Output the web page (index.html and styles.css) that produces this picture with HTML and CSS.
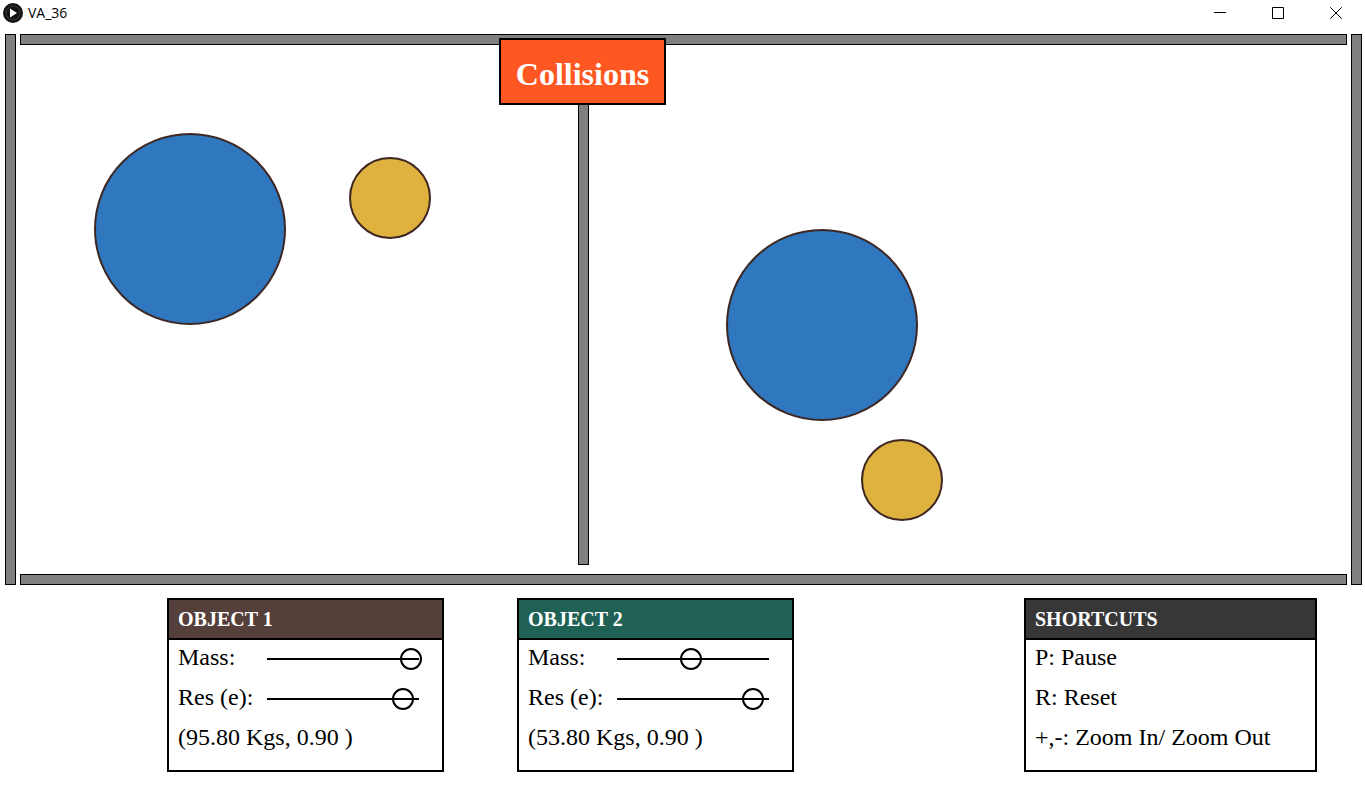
FILE: index.html
```html
<!DOCTYPE html>
<html lang="en">
<head>
<meta charset="utf-8">
<title>VA_36</title>
<link rel="stylesheet" href="styles.css">
</head>
<body>
<header class="titlebar">
  <svg class="app-icon" viewBox="0 0 20 20" aria-hidden="true">
    <circle cx="10" cy="10" r="10" fill="#101214"/>
    <circle cx="10" cy="10" r="7" fill="none" stroke="#3a3d40" stroke-width="1"/>
    <path d="M7 5.500 14 10 7 14.500Z" fill="#fff"/>
  </svg>
  <span class="window-title">VA_36</span>
  <div class="window-controls">
    <button type="button" aria-label="Minimize"><svg viewBox="0 0 12 12"><path d="M0 5.500H12"/></svg></button>
    <button type="button" aria-label="Maximize"><svg viewBox="0 0 12 12"><path d="M.5.5h11v11H.5z"/></svg></button>
    <button type="button" aria-label="Close"><svg viewBox="0 0 12 12"><path d="M.3.3 11.700 11.700M11.700.3.3 11.700"/></svg></button>
  </div>
</header>
<main>
  <section class="stage" aria-label="Simulation">
    <div class="wall wall-side"></div>
    <div class="arena">
      <div class="wall wall-flat"></div>
      <div class="chambers">
        <div class="chamber chamber-left">
          <div class="ball ball-blue ball-a"></div>
          <div class="ball ball-gold ball-b"></div>
        </div>
        <div class="divider">
          <h1 class="badge">Collisions</h1>
        </div>
        <div class="chamber chamber-right">
          <div class="ball ball-blue ball-c"></div>
          <div class="ball ball-gold ball-d"></div>
        </div>
      </div>
      <div class="wall wall-flat"></div>
    </div>
    <div class="wall wall-side"></div>
  </section>
  <div class="panels">
    <section class="panel">
      <h2 class="panel-head head-brown">OBJECT 1</h2>
      <div class="panel-body">
        <div class="row"><label for="mass1">Mass:</label><input id="mass1" type="range" min="10" max="100" step="0.1" value="95.8"></div>
        <div class="row"><label for="res1">Res (e):</label><input id="res1" type="range" min="0" max="1" step="0.01" value="0.9"></div>
        <div class="row"><span>(95.80 Kgs, 0.90 )</span></div>
      </div>
    </section>
    <section class="panel">
      <h2 class="panel-head head-green">OBJECT 2</h2>
      <div class="panel-body">
        <div class="row"><label for="mass2">Mass:</label><input id="mass2" type="range" min="10" max="100" step="0.1" value="53.8"></div>
        <div class="row"><label for="res2">Res (e):</label><input id="res2" type="range" min="0" max="1" step="0.01" value="0.9"></div>
        <div class="row"><span>(53.80 Kgs, 0.90 )</span></div>
      </div>
    </section>
    <section class="panel panel-shortcuts">
      <h2 class="panel-head head-dark">SHORTCUTS</h2>
      <div class="panel-body">
        <div class="row"><span>P: Pause</span></div>
        <div class="row"><span>R: Reset</span></div>
        <div class="row"><span>+,-: Zoom In/ Zoom Out</span></div>
      </div>
    </section>
  </div>
</main>
</body>
</html>
```
FILE: styles.css
```css
* {
  box-sizing: border-box;
}

body {
  margin: 0;
  background: #fff;
  color: #000;
  font-family: "Liberation Serif", "Times New Roman", serif;
}

.titlebar {
  display: flex;
  align-items: center;
  height: 26px;
  margin-bottom: 8px;
  padding-left: 3px;
  font-family: "Open Sans", "Noto Sans", sans-serif;
}

.app-icon {
  width: 20px;
  height: 20px;
  margin-right: 5px;
}

.window-title {
  font-size: 14px;
  line-height: 20px;
}

.window-controls {
  display: flex;
  margin-left: auto;
}

.window-controls button {
  display: flex;
  align-items: center;
  justify-content: center;
  width: 58px;
  height: 26px;
  padding: 0;
  border: 0;
  background: none;
}

.window-controls svg {
  width: 12px;
  height: 12px;
  fill: none;
  stroke: #000;
  stroke-width: 1;
}

.stage {
  display: flex;
  gap: 4px;
  padding: 0 3px 0 5px;
}

.wall,
.divider {
  border: 1px solid #000;
  background: #808080;
}

.wall-side {
  width: 11px;
}

.wall-flat {
  height: 11px;
}

.arena {
  display: flex;
  flex: 1;
  flex-direction: column;
}

.chambers {
  display: flex;
  min-height: 529px;
}

.chamber {
  position: relative;
}

.chamber-left {
  flex: 558;
}

.chamber-right {
  flex: 758;
}

.divider {
  position: relative;
  width: 11px;
  margin-bottom: 9px;
}

.badge {
  position: absolute;
  top: -8px;
  left: -80px;
  width: 167px;
  margin: 0;
  padding: 17px 0 11px;
  border: 2px solid #000;
  background: #ff5722;
  color: #fff;
  font-size: 32px;
  line-height: 35px;
  text-align: center;
}

.ball {
  position: absolute;
  border: 2px solid #3e2723;
  border-radius: 50%;
}

.ball-blue {
  width: 192px;
  height: 192px;
  background: #2f78c0;
}

.ball-gold {
  width: 82px;
  height: 82px;
  background: #dfb23f;
}

.ball-a {
  top: 88px;
  left: 74px;
}

.ball-b {
  top: 112px;
  left: 329px;
}

.ball-c {
  top: 184px;
  left: 137px;
}

.ball-d {
  top: 394px;
  left: 272px;
}

.panels {
  display: flex;
  gap: 73px;
  padding: 13px 48px 24px 167px;
}

.panel {
  width: 277px;
  border: 2px solid #000;
}

.panel-shortcuts {
  width: 293px;
  margin-left: auto;
}

.panel-head {
  margin: 0;
  padding: 0 9px;
  border-bottom: 2px solid #000;
  color: #fff;
  font-size: 20px;
  line-height: 38px;
}

.head-brown {
  background: #553f3b;
}

.head-green {
  background: #1f6255;
}

.head-dark {
  background: #373737;
}

.panel-body {
  padding: 0 9px 10px;
  font-size: 24px;
}

.row {
  display: flex;
  align-items: center;
  height: 40px;
  padding-bottom: 2px;
  white-space: nowrap;
}

.row label,
.row span {
  padding-bottom: 4px;
}

.row label {
  width: 79px;
}

.row input {
  width: 172px;
  height: 22px;
  margin: 0;
  appearance: none;
  background: linear-gradient(#000, #000) center / 152px 2px no-repeat;
}

.row input::-webkit-slider-thumb {
  width: 22px;
  height: 22px;
  appearance: none;
  border: 2px solid #000;
  border-radius: 50%;
  background: transparent;
}
```
